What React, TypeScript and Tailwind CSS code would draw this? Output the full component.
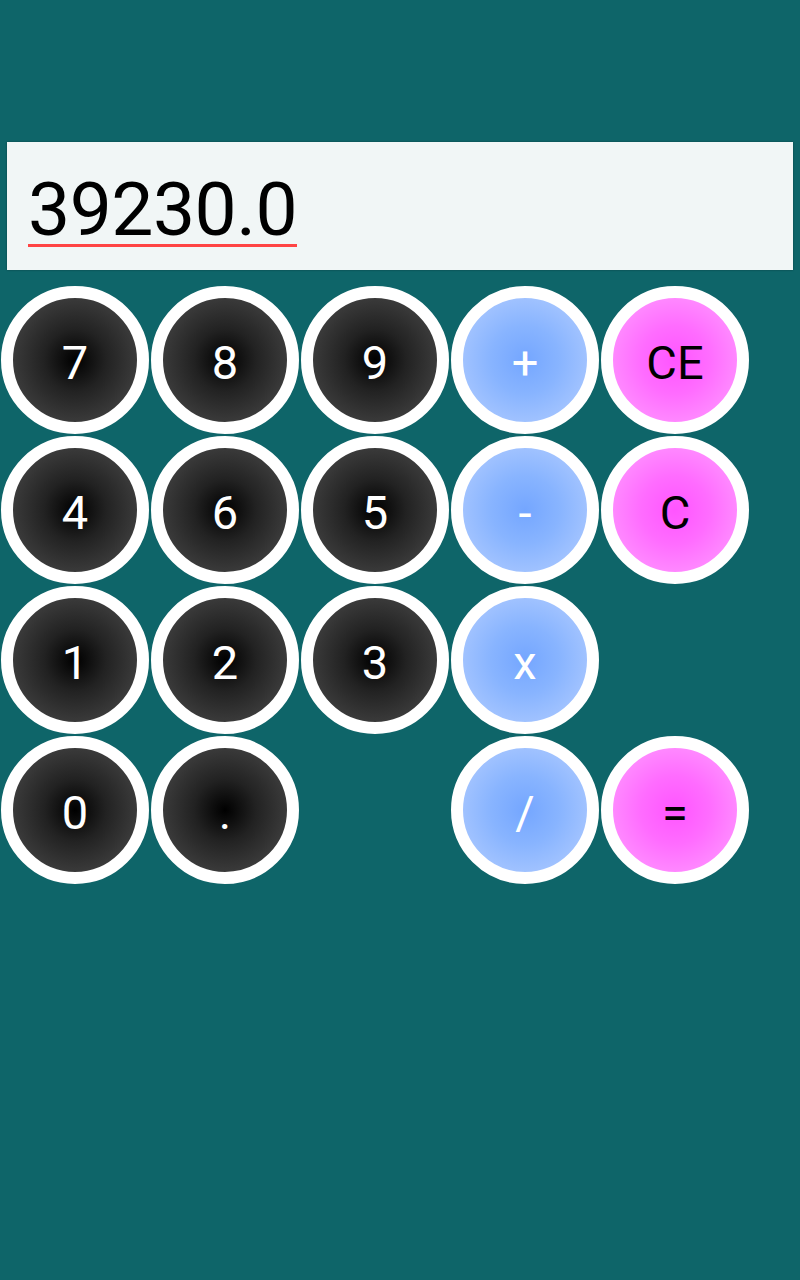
import React from 'react';

type Kind = 'num' | 'op' | 'ctl' | 'empty';

interface Key {
  label: string;
  kind: Kind;
}

const rows: Key[][] = [
  [{ label: '7', kind: 'num' }, { label: '8', kind: 'num' }, { label: '9', kind: 'num' }, { label: '+', kind: 'op' }, { label: 'CE', kind: 'ctl' }],
  [{ label: '4', kind: 'num' }, { label: '6', kind: 'num' }, { label: '5', kind: 'num' }, { label: '-', kind: 'op' }, { label: 'C', kind: 'ctl' }],
  [{ label: '1', kind: 'num' }, { label: '2', kind: 'num' }, { label: '3', kind: 'num' }, { label: 'x', kind: 'op' }, { label: '', kind: 'empty' }],
  [{ label: '0', kind: 'num' }, { label: '.', kind: 'num' }, { label: '', kind: 'empty' }, { label: '/', kind: 'op' }, { label: '=', kind: 'ctl' }],
];

const kindClass: Record<Kind, string> = {
  num: 'bg-[radial-gradient(circle_closest-side,#000000_0%,#222222_50%,#3a3a3a_100%)] text-white',
  op: 'bg-[radial-gradient(circle_closest-side,#74a6ff_0%,#88b4ff_55%,#a0c2ff_100%)] text-white',
  ctl: 'bg-[radial-gradient(circle_closest-side,#ff55ff_0%,#ff6cff_55%,#ff88ff_100%)] text-black',
  empty: '',
};

export default function App() {
  return (
    <div className="w-[800px] h-[1280px] bg-[#0e6569] pt-[142px] font-['Roboto','Liberation_Sans',sans-serif]">
      {/* Pantalla */}
      <div className="mx-[7px] h-[128px] bg-[#f1f6f6] shadow-[0_0_2px_rgba(0,0,0,0.35)] px-[21px] pt-[32px]">
        <span className="inline-block text-[75px] leading-[70px] text-black border-b-[3px] border-[#ff4444] tracking-[-0.5px]">
          39230.0
        </span>
      </div>

      {/* Teclado */}
      <div className="mt-[15px] flex flex-col">
        {rows.map((row, r) => (
          <div key={r} className="flex">
            {row.map((key, c) => (
              <div key={c} className="w-[150px] h-[150px] flex items-center justify-center">
                {key.kind !== 'empty' && (
                  <button
                    className={`w-[148px] h-[148px] rounded-full border-[12px] border-white flex items-center justify-center pt-[5px] text-[47px] leading-none ${kindClass[key.kind]}`}
                  >
                    {key.label}
                  </button>
                )}
              </div>
            ))}
          </div>
        ))}
      </div>
    </div>
  );
}
